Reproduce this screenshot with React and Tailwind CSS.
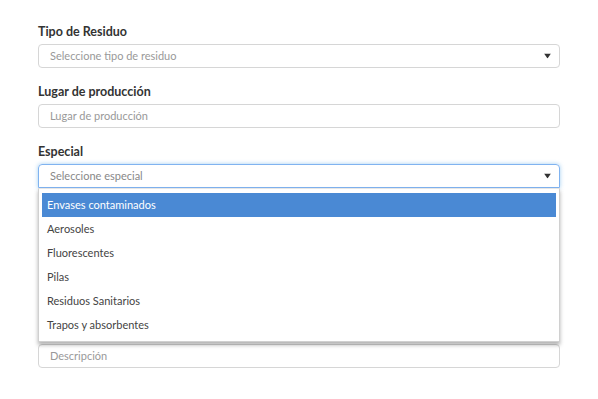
import React from 'react';

const font = { fontFamily: 'Lato, "Open Sans", sans-serif' };

function Caret() {
  return (
    <svg className="absolute right-[8px] top-1/2 -translate-y-1/2" width="7" height="5" viewBox="0 0 7 5">
      <path d="M0 0h7L3.5 5z" fill="#333" />
    </svg>
  );
}

function Field({ label, children }) {
  return (
    <div className="mb-[16px]">
      <div className="h-[16px] leading-[16px] text-[12.5px] font-bold text-[#333] mb-[4px]">{label}</div>
      {children}
    </div>
  );
}

const options = [
  'Envases contaminados',
  'Aerosoles',
  'Fluorescentes',
  'Pilas',
  'Residuos Sanitarios',
  'Trapos y absorbentes',
];

export default function App() {
  return (
    <div className="w-[598px] h-[399px] bg-white overflow-hidden" style={font}>
      <div className="pt-[24px] pl-[38px] w-[560px]">
        <Field label="Tipo de Residuo">
          <div className="relative h-[24px] border border-[#d6d6d6] rounded-[4px] pl-[11px] text-[11px] leading-[22px] text-[#999]">
            Seleccione tipo de residuo
            <Caret />
          </div>
        </Field>
        <Field label="Lugar de producción">
          <div className="h-[24px] border border-[#d6d6d6] rounded-[4px] pl-[11px] text-[11px] leading-[22px] text-[#999]">
            Lugar de producción
          </div>
        </Field>
        <div className="relative">
          <Field label="Especial">
            <div className="relative h-[24px] border border-[#80b3f0] rounded-t-[4px] shadow-[0_0_4px_rgba(102,175,233,0.6)] pl-[11px] text-[11px] leading-[22px] text-[#888]">
              Seleccione especial
              <Caret />
            </div>
          </Field>
          <div className="absolute left-0 right-0 top-[44px] z-10 bg-white border border-[#d0d0d0] border-t-[#e6e6e6] px-[3px] py-[4px] shadow-[0_3px_4px_rgba(0,0,0,0.3)]">
            {options.map((o, i) => (
              <div
                key={o}
                className={`h-[24px] leading-[24px] pl-[5px] text-[11px] ${i === 0 ? 'bg-[#4a89d4] text-white' : 'text-[#444]'}`}
              >
                {o}
              </div>
            ))}
          </div>
          <div className="h-[120px]" />
          <div className="mt-[20px] h-[24px] border border-[#d6d6d6] rounded-[4px] pl-[11px] text-[11px] leading-[22px] text-[#999]">
            Descripción
          </div>
        </div>
      </div>
    </div>
  );
}
